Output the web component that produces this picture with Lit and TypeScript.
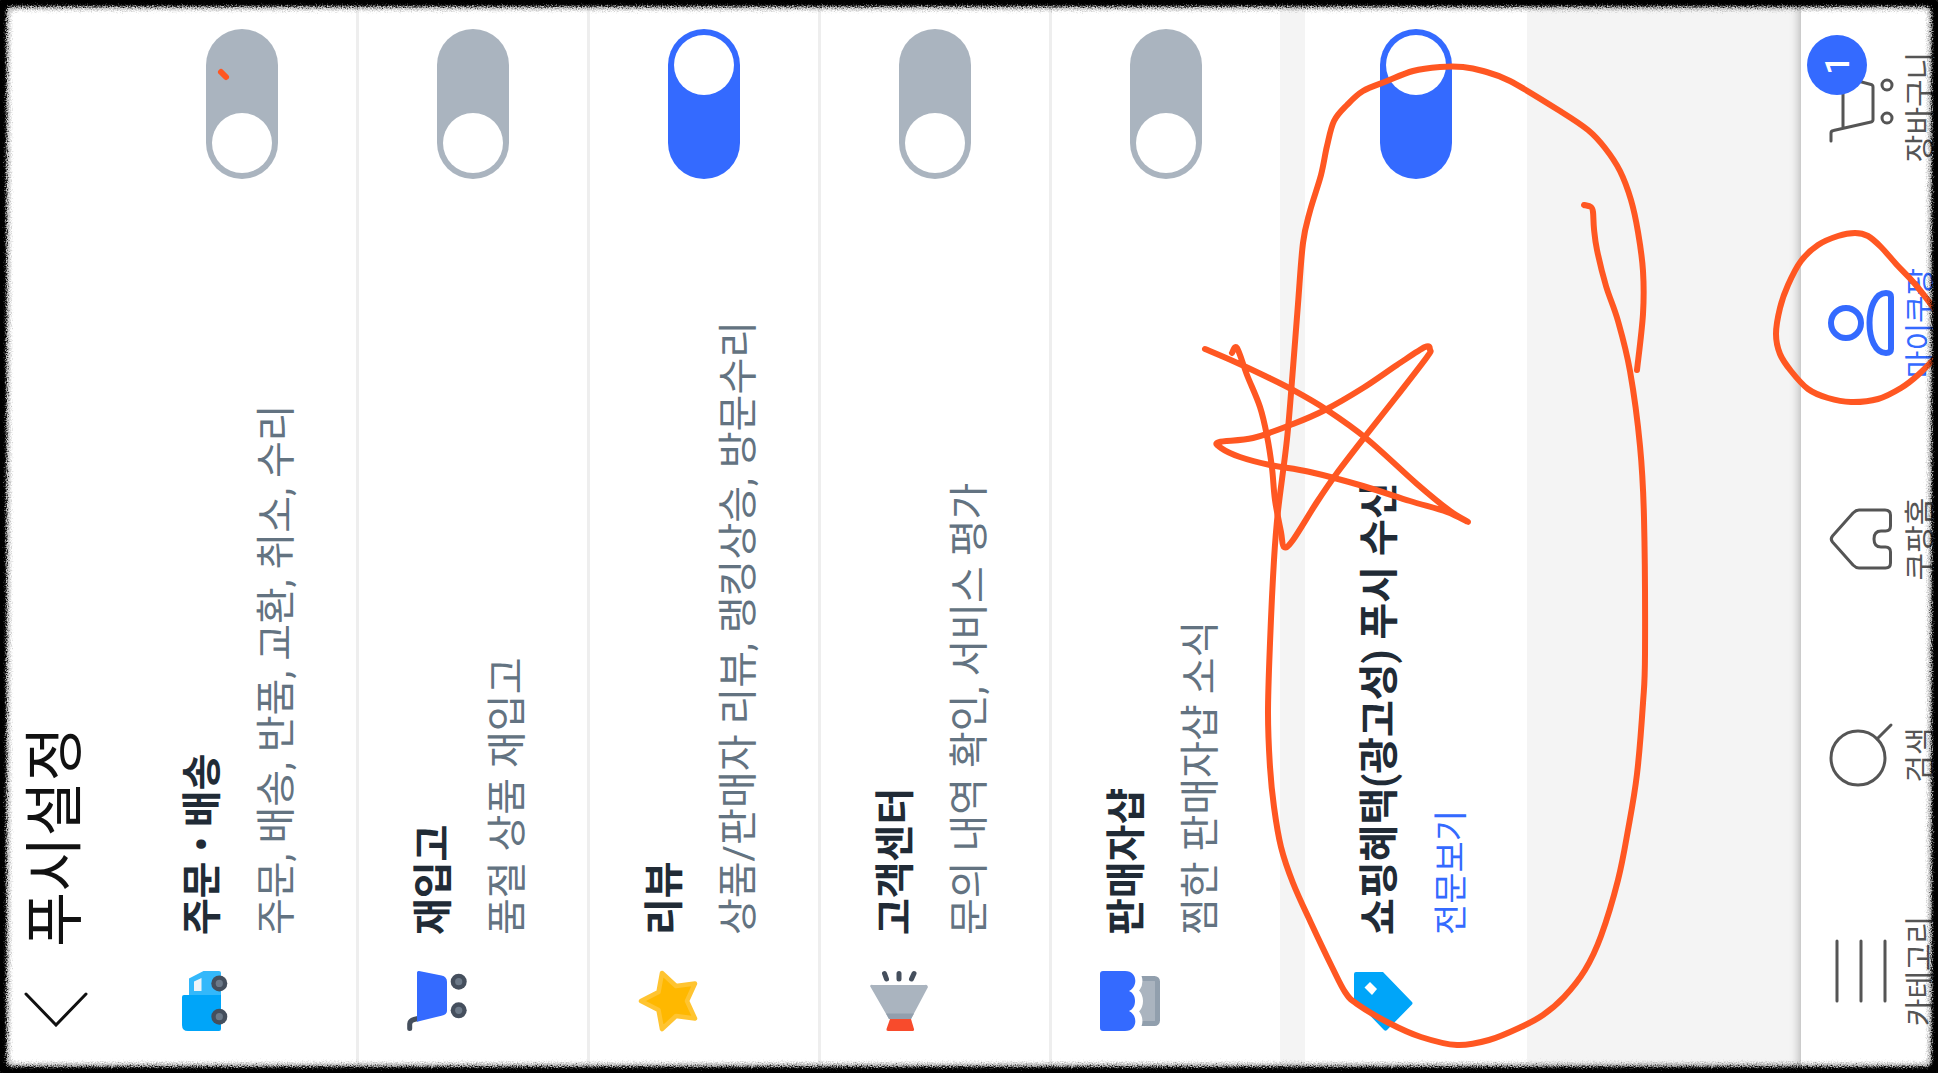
import { LitElement, html, svg, css, nothing, TemplateResult } from "lit";
import { customElement, property, state } from "lit/decorators.js";
import { classMap } from "lit/directives/class-map.js";

type Point = [number, number];

interface Setting {
  id: string;
  title: string;
  detail: string;
  on: boolean;
  link?: boolean;
}

interface Tab {
  id: string;
  label: string;
  active?: boolean;
  badge?: string;
}

const wheel = (cx: number, cy: number) => svg`
  <circle cx=${cx} cy=${cy} r="8" fill="#454f5d" />
  <circle cx=${cx} cy=${cy} r="3.6" fill="#6c7988" />
`;

const ROW_ICONS: Record<string, TemplateResult> = {
  order: svg`
    <path d="M6 6H34Q36 6 36 8V45H2Q0 45 0 43V12Q0 6 6 6Z" fill="#00a5f9" />
    <path d="M36 13H52.500L60 27.500V43Q60 45 58 45H36Z" fill="#33b8fb" />
    <path d="M40 18H49.500L53 25.500H40Z" fill="#eff3f8" />
    ${wheel(14.3, 43.3)}${wheel(47.6, 43.3)}
  `,
  restock: svg`
    <path d="M2.500 2.700H7Q10.500 3 11.500 7L12.500 11" fill="none" stroke="#454f5d" stroke-width="5" stroke-linecap="round" />
    <path d="M9.300 10H58.500Q60.300 10 60 12L55.500 34.500Q54.300 40 49 40H20Q16.500 40 15.300 34.500Z" fill="#346aff" />
    ${wheel(20.7, 51.7)}${wheel(49.3, 51.7)}
  `,
  review: svg`
    <path d="M30 3L39 20.500L58 24L45 38L47.500 57L30 49L12.500 57L15 38L2 24L21 20.500Z" fill="#ffb800" stroke="#ffc431" stroke-width="4.500" stroke-linejoin="round" />
  `,
  support: svg`
    <path d="M45 1Q47 2 46 4V56Q47 58 44 59L12 42V20Z" fill="#aab4bf" />
    <path d="M17.500 17L12 20V42L17.500 45Z" fill="#929fad" />
    <path d="M12 21V42L2 45Q0 45.500 0 43V19Q0 17 2 17.500Z" fill="#f84b2c" />
    <path d="M52 17.500L57.500 15.500M52 30H57.500M52 42.500L57.500 45" stroke="#454f5d" stroke-width="5" stroke-linecap="round" />
  `,
  shop: svg`
    <rect x="7.500" y="26" width="45" height="31.500" rx="3" fill="#aab4bf" stroke="#919fad" stroke-width="5" />
    <path d="M0 26A10 9.500 0 0 0 20 29.500A10 8.500 0 0 0 40 29.500A10 9.500 0 0 0 60 26Z" fill="none" stroke="#fff" stroke-width="10" />
    <path d="M0 3Q0 0 3 0H57Q60 0 60 3V25C60 38 44 38 40 29C37 37 23 37 20 29C16 38 0 38 0 25Z" fill="#346aff" />
  `,
  benefit: svg`
    <path d="M32 1H57Q59 1 59 3V30L29 59Q28 60 26.500 59L1 34Q-.300 32.500 1 31Z" fill="#00a5f9" />
    <path d="M49 17L42 24L36 19L43.500 11.500Z" fill="#fff" />
  `,
};

const TAB_ICONS: Record<string, TemplateResult> = {
  category: svg`<path d="M2 9H62M2 33H62M2 57H62" />`,
  search: svg`<circle cx="29" cy="30" r="27" /><path d="M48 49L62 63" />`,
  home: svg`<path d="M29 4.500Q32 2 35 4.500L58 25Q61 28 61 31V57Q61 62.500 56 62.500H45Q40 62.500 40 57.500V53Q40 46 32 46Q24 46 24 53V57.500Q24 62.500 19 62.500H8Q3 62.500 3 57.500V31Q3 28 6 25Z" />`,
  my: svg`<g stroke-width="6"><circle cx="32" cy="18" r="15" /><path d="M6 63H58Q62 63 62 58C62 36 2 36 2 58Q2 63 6 63Z" /></g>`,
  cart: svg`<path d="M-2 3H6Q8 3 8.500 5.500L17 43Q17.500 45 19.500 45H52Q54 45 54.500 43L62 15H11" /><circle cx="21" cy="59" r="5" /><circle cx="54" cy="59" r="5" />`,
};

const SETTINGS: Setting[] = [
  { id: "order", title: "주문 • 배송", detail: "주문, 배송, 반품, 교환, 취소, 수리", on: false },
  { id: "restock", title: "재입고", detail: "품절 상품 재입고", on: false },
  { id: "review", title: "리뷰", detail: "상품/판매자 리뷰, 랭킹상승, 방문수리", on: true },
  { id: "support", title: "고객센터", detail: "문의 내역 확인, 서비스 평가", on: false },
  { id: "shop", title: "판매자샵", detail: "찜한 판매자샵 소식", on: false },
];

const BENEFIT: Setting = {
  id: "benefit",
  title: "쇼핑혜택(광고성) 푸시 수신",
  detail: "전문보기",
  on: true,
  link: true,
};

const TABS: Tab[] = [
  { id: "category", label: "카테고리" },
  { id: "search", label: "검색" },
  { id: "home", label: "쿠팡홈" },
  { id: "my", label: "마이쿠팡", active: true },
  { id: "cart", label: "장바구니", badge: "1" },
];

/* Pen strokes drawn over the screen, as sampled points. */
const STROKES: Point[][] = [
  [[221, 72], [226, 77]],
  [
    [1637, 370], [1643, 314], [1643, 271], [1638, 232], [1631, 200], [1620, 171], [1605, 148], [1588, 130],
    [1560, 111], [1510, 81], [1483, 71], [1463, 67], [1440, 67], [1413, 71], [1387, 81], [1363, 91],
    [1347, 105], [1334, 121], [1327, 146], [1321, 175], [1310, 211], [1303, 243], [1298, 304], [1293, 368],
    [1287, 439], [1278, 511], [1274, 560], [1270, 643], [1268, 713], [1270, 767], [1274, 807], [1281, 847],
    [1293, 883], [1311, 923], [1332, 967], [1345, 992], [1357, 1004], [1389, 1023], [1421, 1037],
    [1457, 1045], [1489, 1040], [1521, 1027], [1543, 1015], [1564, 997], [1585, 970], [1601, 936],
    [1618, 880], [1628, 830], [1637, 774], [1643, 703], [1645, 654], [1644, 518], [1640, 446], [1630, 371],
    [1618, 321], [1606, 286], [1597, 250], [1594, 229], [1593, 212], [1591, 207], [1584, 205],
  ],
  [
    [1232, 353], [1237, 348], [1247, 375], [1260, 407], [1267, 436], [1272, 468], [1275, 500], [1281, 532],
    [1284, 547], [1293, 540], [1317, 502], [1337, 473], [1367, 434], [1397, 396], [1427, 357], [1430, 350],
    [1425, 347], [1397, 365], [1363, 388], [1325, 410], [1293, 424], [1253, 438], [1219, 442], [1221, 448],
    [1240, 457], [1270, 465], [1310, 472], [1363, 486], [1410, 501], [1447, 512], [1468, 522], [1450, 511],
    [1417, 484], [1367, 439], [1327, 410], [1293, 390], [1263, 375], [1233, 361], [1205, 349],
  ],
  [
    [1940, 316], [1915, 284], [1897, 265], [1881, 247], [1868, 236], [1855, 233], [1838, 236], [1818, 245],
    [1801, 261], [1788, 285], [1780, 308], [1776, 334], [1780, 354], [1791, 371], [1808, 389], [1828, 398],
    [1851, 402], [1878, 399], [1901, 388], [1918, 375], [1938, 355],
  ],
];

/* Joins sampled points with a smooth Catmull-Rom curve. */
function smooth(points: Point[]): string {
  let d = `M${points[0][0]} ${points[0][1]}`;
  for (let i = 0; i < points.length - 1; i++) {
    const a = points[i - 1] ?? points[i];
    const b = points[i];
    const c = points[i + 1];
    const e = points[i + 2] ?? c;
    d += `C${b[0] + (c[0] - a[0]) / 6} ${b[1] + (c[1] - a[1]) / 6} ${c[0] - (e[0] - b[0]) / 6} ${c[1] - (e[1] - b[1]) / 6} ${c[0]} ${c[1]}`;
  }
  return d;
}

@customElement("setting-row")
class SettingRow extends LitElement {
  @property({ attribute: false }) setting!: Setting;
  @property({ type: Boolean }) divided = false;
  @state() private on?: boolean;

  static styles = css`
    :host {
      display: block;
      background: #fff;
    }
    .row {
      display: flex;
      align-items: center;
      padding: 0 29px 0 42px;
    }
    .divided {
      border-bottom: 3px solid #eee;
    }
    .icon {
      width: 60px;
      height: 60px;
      margin-top: 48px;
      align-self: flex-start;
      overflow: visible;
    }
    .text {
      flex: 1;
      display: flex;
      flex-direction: column;
      align-items: flex-start;
      gap: 8px;
      padding: 42px 0 46px 36px;
    }
    .title {
      font-size: 40px;
      line-height: 66px;
      font-weight: 700;
      color: #212b36;
    }
    .detail {
      margin: 0;
      font-size: 40px;
      line-height: 66px;
      color: #637381;
    }
    .more {
      font-size: 34px;
      line-height: 60px;
      color: #346aff;
      text-decoration: none;
    }
    .switch {
      appearance: none;
      display: flex;
      width: 150px;
      height: 72px;
      margin: 0;
      padding: 6px;
      box-sizing: border-box;
      border-radius: 36px;
      background: #aab4bf;
    }
    .switch::before {
      content: "";
      width: 60px;
      height: 60px;
      border-radius: 50%;
      background: #fff;
    }
    .switch:checked {
      justify-content: flex-end;
      background: #346aff;
    }
  `;

  render() {
    const s = this.setting;
    return html`
      <div class=${classMap({ row: true, divided: this.divided })}>
        <svg class="icon" viewBox="0 0 60 60" aria-hidden="true">${ROW_ICONS[s.id]}</svg>
        <div class="text">
          <label class="title" for="switch">${s.title}</label>
          ${s.link
            ? html`<a class="more" href="#terms">${s.detail}</a>`
            : html`<p class="detail">${s.detail}</p>`}
        </div>
        <input
          class="switch"
          id="switch"
          type="checkbox"
          role="switch"
          .checked=${this.on ?? s.on}
          @change=${(e: Event) => (this.on = (e.target as HTMLInputElement).checked)}
        />
      </div>
    `;
  }
}

@customElement("tab-bar")
class TabBar extends LitElement {
  static styles = css`
    :host {
      display: block;
      background: #fff;
      box-shadow: 0 -1px 10px rgba(0, 0, 0, 0.3);
    }
    .tabs {
      display: grid;
      grid-template-columns: repeat(5, 1fr);
      margin: 0 -1px 0 -6px;
    }
    .tab {
      display: flex;
      flex-direction: column;
      align-items: center;
      gap: 8px;
      padding: 27px 0 0;
      font-size: 30px;
      line-height: 36px;
      color: #555;
      text-decoration: none;
    }
    .active {
      color: #346aff;
    }
    .picture {
      position: relative;
      display: flex;
    }
    .icon {
      width: 64px;
      height: 66px;
      overflow: visible;
      fill: none;
      stroke: currentColor;
      stroke-width: 3;
      stroke-linecap: round;
      stroke-linejoin: round;
    }
    .badge {
      position: absolute;
      left: 44px;
      top: -21px;
      width: 60px;
      height: 60px;
      border-radius: 50%;
      background: #346aff;
      color: #fff;
      font-size: 34px;
      line-height: 60px;
      font-weight: 500;
      text-align: center;
    }
  `;

  render() {
    return html`
      <nav class="tabs">
        ${TABS.map(
          (t) => html`
            <a class=${classMap({ tab: true, active: !!t.active })} href="#${t.id}">
              <span class="picture">
                <svg class="icon" viewBox="0 0 64 66" aria-hidden="true">${TAB_ICONS[t.id]}</svg>
                ${t.badge ? html`<span class="badge">${t.badge}</span>` : nothing}
              </span>
              <span>${t.label}</span>
            </a>
          `
        )}
      </nav>
    `;
  }
}

@customElement("app-root")
class AppRoot extends LitElement {
  static styles = css`
    :host {
      display: block;
      position: relative;
      width: 100%;
      height: 100vh;
      overflow: hidden;
      background: #000;
      font-family: Roboto, "Noto Sans CJK KR", sans-serif;
    }
    /* The phone screen lies on its side: its top faces the left of the window. */
    .screen {
      display: flex;
      flex-direction: column;
      width: 100vh;
      height: 100vw;
      transform-origin: 0 0;
      transform: translateY(100vh) rotate(-90deg);
      background: #f4f4f4;
    }
    .header {
      display: flex;
      align-items: center;
      gap: 45px;
      padding: 1px 46px 17px;
      background: #fff;
    }
    .back {
      display: flex;
      padding: 0;
      border: 0;
      background: none;
    }
    .chevron {
      width: 35px;
      height: 64px;
      fill: none;
      stroke: #111;
      stroke-width: 3;
      stroke-linecap: round;
    }
    .heading {
      margin: 0;
      font-size: 60px;
      line-height: 110px;
      font-weight: 400;
      color: #111;
    }
    .content {
      flex: 1;
      display: flex;
      flex-direction: column;
      gap: 25px;
    }
    .overlay {
      position: absolute;
      inset: 0;
      width: 100%;
      height: 100%;
      pointer-events: none;
    }
    .pen {
      fill: none;
      stroke: #ff5722;
      stroke-width: 6;
      stroke-linecap: round;
      stroke-linejoin: round;
    }
  `;

  render() {
    return html`
      <div class="screen">
        <header class="header">
          <button class="back" aria-label="뒤로">
            <svg class="chevron" viewBox="0 0 35 64"><path d="M33 2L2 32L33 62" /></svg>
          </button>
          <h1 class="heading">푸시설정</h1>
        </header>
        <main class="content">
          <section>
            ${SETTINGS.map(
              (s, i) => html`<setting-row .setting=${s} ?divided=${i < SETTINGS.length - 1}></setting-row>`
            )}
          </section>
          <section><setting-row .setting=${BENEFIT}></setting-row></section>
        </main>
        <tab-bar></tab-bar>
      </div>
      <svg class="overlay" viewBox="0 0 1938 1073" aria-hidden="true">
        ${STROKES.map((points) => svg`<path class="pen" d=${smooth(points)} />`)}
      </svg>
      <svg class="overlay" aria-hidden="true">
        <defs>
          <filter id="grain" x="-2%" y="-2%" width="104%" height="104%">
            <feTurbulence type="fractalNoise" baseFrequency="0.8" numOctaves="2" seed="4" result="noise" />
            <feGaussianBlur in="SourceGraphic" stdDeviation="1" result="soft" />
            <feDisplacementMap in="soft" in2="noise" scale="8" xChannelSelector="R" yChannelSelector="G" />
          </filter>
        </defs>
        <rect width="100%" height="100%" rx="16" fill="none" stroke="#000" stroke-opacity="0.2" stroke-width="21" filter="url(#grain)" />
        <rect width="100%" height="100%" rx="12" fill="none" stroke="#000" stroke-width="13" filter="url(#grain)" />
      </svg>
    `;
  }
}
